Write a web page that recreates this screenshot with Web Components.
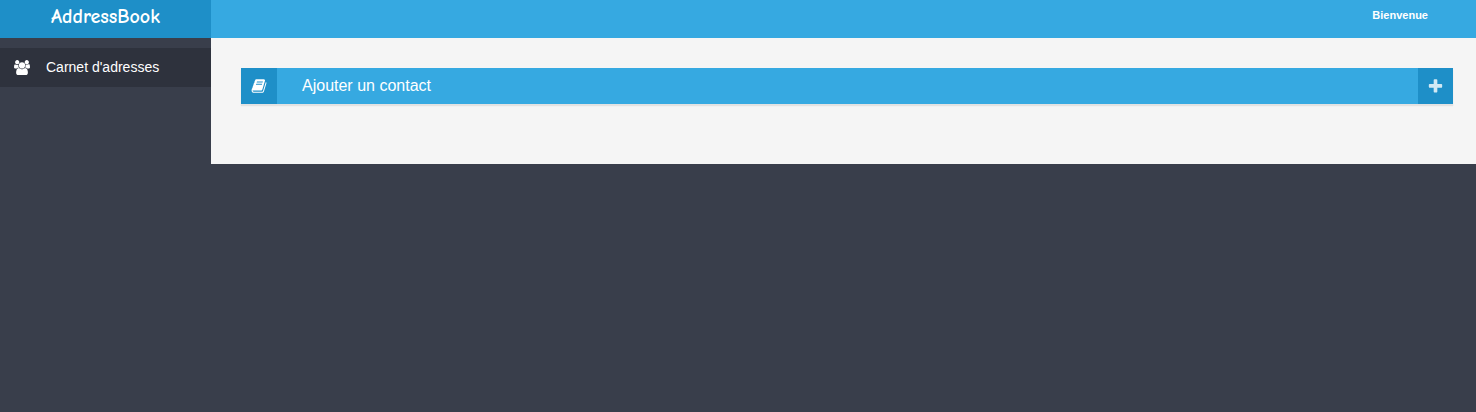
<!DOCTYPE html>
<html lang="fr">
<head>
<meta charset="utf-8">
<title>AddressBook</title>
<style>
  body { margin: 0; min-height: 100vh; background: #393e4b; font-family: "Liberation Sans", Arial, sans-serif; font-size: 14px; color: #fff; }
</style>
</head>
<body>
<address-app>
  <app-brand slot="brand">AddressBook</app-brand>
  <app-topbar slot="topbar">Bienvenue</app-topbar>
  <nav-item slot="nav" href="#contacts"><fa-icon slot="icon" name="users"></fa-icon>Carnet d'adresses</nav-item>
  <contact-panel><fa-icon slot="icon" name="book"></fa-icon>Ajouter un contact</contact-panel>
</address-app>
<script>
const define = (name, html) => {
  const template = document.createElement('template');
  template.innerHTML = html;
  customElements.define(name, class extends HTMLElement {
    constructor() {
      super();
      this.attachShadow({ mode: 'open' }).append(template.content.cloneNode(true));
    }
    connectedCallback() {
      const link = this.shadowRoot.querySelector('a');
      if (link && this.hasAttribute('href')) link.href = this.getAttribute('href');
    }
  });
};

const ICONS = {
  users: ['0 0 1920 1792', 'M593 896q-162 5-265 128h-134q-82 0-138-40.5t-56-118.5q0-353 124-353 6 0 43.5 21t97.5 42.5 119 21.5q67 0 133-23-5 37-5 66 0 158 81 294zm1071 637q0 120-73 189.5t-194 69.5h-874q-121 0-194-69.5t-73-189.5q0-53 3.5-103.5t14-109 26.5-108.5 43-97.5 62-81 85.5-53.5 111.5-20q10 0 43 21.5t73 48 107 48 135 21.5 135-21.5 107-48 73-48 43-21.5q61 0 111.5 20t85.5 53.5 62 81 43 97.5 26.5 108.5 14 109 3.5 103.5zm-1024-1277q0 106-75 181t-181 75-181-75-75-181 75-181 181-75 181 75 75 181zm704 384q0 159-112.5 271.5t-271.5 112.5-271.5-112.5-112.5-271.5 112.5-271.5 271.5-112.5 271.5 112.5 112.5 271.5zm576 225q0 78-56 118.5t-138 40.5h-134q-103-123-265-128 81-136 81-294 0-29-5-66 66 23 133 23 59 0 119-21.5t97.5-42.5 43.5-21q124 0 124 353zm-128-609q0 106-75 181t-181 75-181-75-75-181 75-181 181-75 181 75 75 181z'],
  book: ['0 0 1792 1792', 'M1703 478q40 57 18 129l-275 906q-19 64-76.5 107.5t-122.5 43.5h-923q-77 0-148.5-53.5t-99.5-131.5q-24-67-2-127 0-4 3-27t4-37q1-8-3-21.5t-3-19.5q2-11 8-21t16.5-23.5 16.5-23.5q23-38 45-91.5t30-91.5q3-10 .5-30t-.5-28q3-11 17-28t17-23q21-36 42-92t25-90q1-9-2.5-32t.5-28q4-13 22-30.5t22-22.5q19-26 42.5-84.5t27.5-96.5q1-8-3-25.5t-2-26.5q2-8 9-18t18-23 17-21q8-12 16.5-30.5t15-35 16-36 19.5-32 26.5-23.5 36-11.5 47.5 5.5l-1 3q38-9 51-9h761q74 0 114 56t18 130l-274 906q-36 119-71.5 153.5t-128.5 34.5h-869q-27 0-38 15-11 16-1 43 24 70 144 70h923q29 0 56-15.5t35-41.5l300-987q7-22 5-57 38 15 59 43zm-1064 2q-4 13 2 22.5t20 9.5h608q13 0 25.5-9.5t16.5-22.5l21-64q4-13-2-22.5t-20-9.5h-608q-13 0-25.5 9.5t-16.5 22.5zm-83 256q-4 13 2 22.5t20 9.5h608q13 0 25.5-9.5t16.5-22.5l21-64q4-13-2-22.5t-20-9.5h-608q-13 0-25.5 9.5t-16.5 22.5z'],
  plus: ['0 0 1792 1792', 'M1600 736v192q0 40-28 68t-68 28h-416v416q0 40-28 68t-68 28h-192q-40 0-68-28t-28-68v-416h-416q-40 0-68-28t-28-68v-192q0-40 28-68t68-28h416v-416q0-40 28-68t68-28h192q40 0 68 28t28 68v416h416q40 0 68 28t28 68z']
};
customElements.define('fa-icon', class extends HTMLElement {
  connectedCallback() {
    if (this.shadowRoot) return;
    const [box, path] = ICONS[this.getAttribute('name')];
    this.attachShadow({ mode: 'open' }).innerHTML = `
      <style>:host { display: block; width: 16px; height: 16px; }
      :host([name="users"]) { height: 15px; }
      :host([name="plus"]) { width: 17px; height: 17px; }
      svg { display: block; width: 100%; height: 100%; fill: currentColor; }</style>
      <svg viewBox="${box}" aria-hidden="true"><path d="${path}"/></svg>`;
  }
});

define('app-brand', `
  <style>
    :host { display: block; background: #1e8fc8; }
    a { display: block; height: 38px; line-height: 34px; text-align: center; color: #fff; text-decoration: none;
        font-family: "Comic Sans MS", "Comic Neue", "Noto Sans", sans-serif; font-size: 20px; font-weight: bold; }
  </style>
  <a href="#"><slot></slot></a>`);

define('app-topbar', `
  <style>
    :host { display: flex; justify-content: flex-end; height: 38px; padding-right: 48px; background: #36a9e1; font-size: 11px; font-weight: bold; line-height: 30px; }
  </style>
  <slot></slot>`);

define('nav-item', `
  <style>
    :host { display: block; }
    a { display: flex; align-items: center; gap: 16px; padding: 0 14px 1px; line-height: 38px; background: #2e323d; color: #fff; text-decoration: none; }
  </style>
  <a><slot name="icon"></slot><span><slot></slot></span></a>`);

define('contact-panel', `
  <style>
    :host { display: block; }
    header { display: flex; height: 36px; background: #36a9e1; box-shadow: 0 2px 1px #e2e2e2; }
    .icon, button { display: flex; align-items: center; justify-content: center; flex: none; width: 36px; background: #1e8fc8; }
    h2 { flex: 1; margin: 0; padding-left: 25px; font-size: 16px; font-weight: normal; line-height: 36px; }
    button { width: 35px; border: 0; padding: 0; color: #d2e9f4; cursor: pointer; }
  </style>
  <header>
    <span class="icon"><slot name="icon"></slot></span>
    <h2><slot></slot></h2>
    <button type="button" aria-label="Ajouter"><fa-icon name="plus"></fa-icon></button>
  </header>`);

define('address-app', `
  <style>
    :host { display: grid; grid-template-columns: 211px 1fr; }
    nav { padding-top: 10px; }
    main { padding: 30px 23px 60px 30px; background: #f5f5f5; }
  </style>
  <slot name="brand"></slot>
  <slot name="topbar"></slot>
  <nav><slot name="nav"></slot></nav>
  <main><slot></slot></main>`);
</script>
</body>
</html>
